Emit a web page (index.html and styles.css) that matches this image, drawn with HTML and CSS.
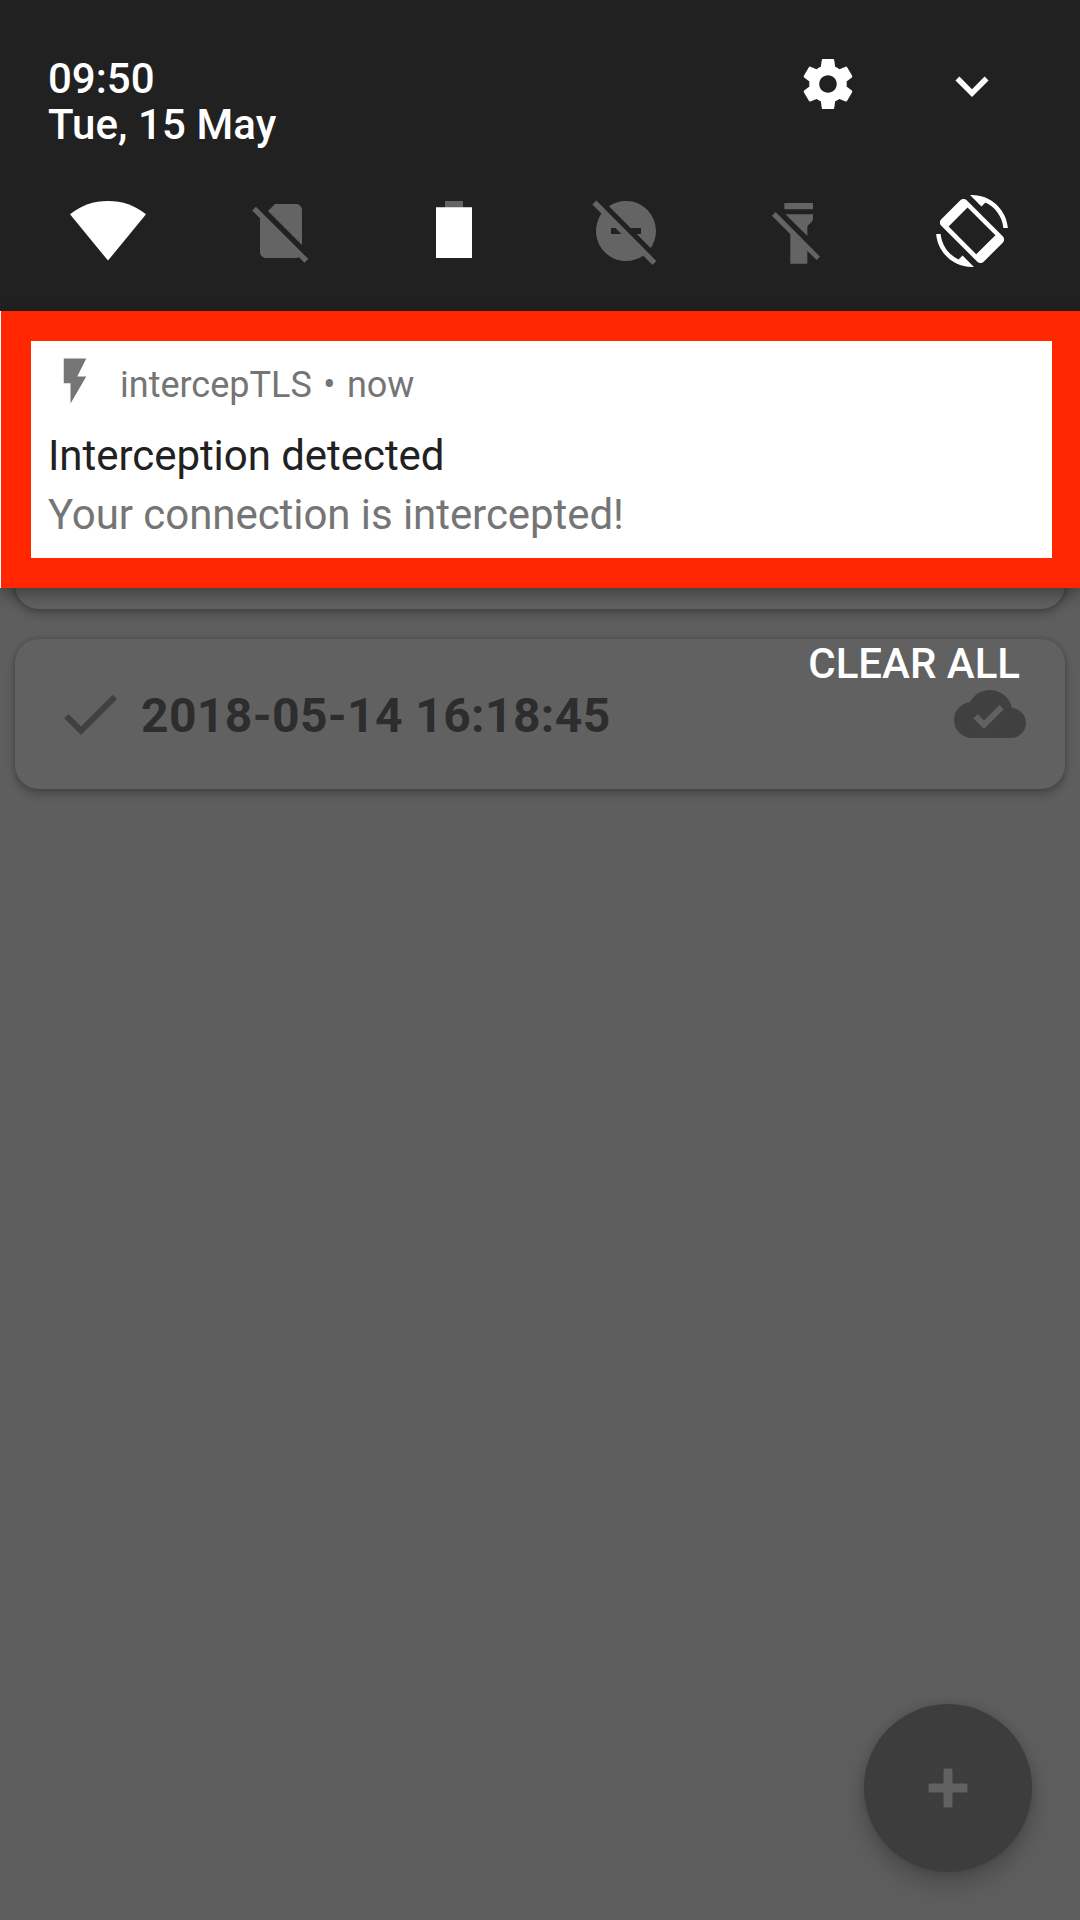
FILE: index.html
```html
<!DOCTYPE html>
<html lang="en">
<head>
<meta charset="utf-8">
<title>intercepTLS</title>
<link rel="stylesheet" href="styles.css">
</head>
<body>
<main class="screen">
  <section class="app">
    <div class="card"></div>
    <div class="card">
      <svg class="icon card-check" viewBox="0 0 24 24"><path d="M9 16.17L4.83 12l-1.42 1.41L9 19 21 7l-1.41-1.41z"/></svg>
      <span class="card-date">2018-05-14 16:18:45</span>
      <svg class="icon card-cloud" viewBox="0 0 24 24"><path d="M19.35 10.04C18.67 6.59 15.64 4 12 4 9.11 4 6.6 5.64 5.35 8.04 2.34 8.36 0 10.91 0 14c0 3.31 2.69 6 6 6h13c2.76 0 5-2.24 5-5 0-2.64-2.05-4.78-4.65-4.96zM10 17l-3.5-3.5 1.41-1.41L10 14.17 15.18 9l1.41 1.41L10 17z"/></svg>
    </div>
    <div class="fab">
      <svg class="fab-plus" viewBox="0 0 40 40"><rect x="15.5" y="0.5" width="9" height="39" rx="1.5"/><rect x="0.5" y="15.5" width="39" height="9" rx="1.5"/></svg>
    </div>
  </section>

  <section class="shade">
    <header class="quick">
      <div class="quick-top">
        <div class="clock"><div>09:50</div><div class="clock-date">Tue, 15 May</div></div>
        <svg class="gear" viewBox="0 0 24 24"><path d="M19.43 12.98c.04-.32.07-.64.07-.98s-.03-.66-.07-.98l2.11-1.65c.19-.15.24-.42.12-.64l-2-3.46c-.12-.22-.39-.3-.61-.22l-2.49 1c-.52-.4-1.08-.73-1.69-.98l-.38-2.65C14.46 2.18 14.25 2 14 2h-4c-.25 0-.46.18-.49.42l-.38 2.65c-.61.25-1.17.59-1.69.98l-2.49-1c-.23-.09-.49 0-.61.22l-2 3.46c-.13.22-.07.49.12.64l2.11 1.65c-.04.32-.07.65-.07.98s.03.66.07.98l-2.11 1.65c-.19.15-.24.42-.12.64l2 3.46c.12.22.39.3.61.22l2.49-1c.52.4 1.08.73 1.69.98l.38 2.65c.03.24.24.42.49.42h4c.25 0 .46-.18.49-.42l.38-2.65c.61-.25 1.17-.59 1.69-.98l2.49 1c.23.09.49 0 .61-.22l2-3.46c.12-.22.07-.49-.12-.64l-2.11-1.65zM12 15.5c-1.93 0-3.5-1.57-3.5-3.5s1.57-3.5 3.5-3.5 3.5 1.57 3.5 3.5-1.57 3.5-3.5 3.5z"/></svg>
        <svg class="chevron" viewBox="0 0 24 24"><path d="M16.59 8.59L12 13.17 7.41 8.59 6 10l6 6 6-6z"/></svg>
      </div>
      <div class="tiles">
        <svg class="tile wifi" viewBox="0 0 78 72"><path d="M1 19.3Q17.5 6 39 6T77 19.3L39 65.6z"/></svg>
        <svg class="icon tile off" viewBox="0 0 24 24"><path d="M18.99 5c0-1.1-.89-2-1.99-2h-7L7.66 5.34 19 16.68 18.99 5zM3.65 3.88L2.38 5.15 5 7.77V19c0 1.1.9 2 2 2h10.01c.35 0 .67-.1.96-.26l1.88 1.88 1.27-1.27L3.65 3.88z"/></svg>
        <svg class="icon tile" viewBox="0 0 72 72"><path class="off" d="M27 6h18v7H27z"/><path d="M18 12.2h36V63H18z"/></svg>
        <svg class="icon tile off" viewBox="0 0 24 24"><path d="M17 11v2h-1.46l4.68 4.68C21.34 16.07 22 14.11 22 12c0-5.52-4.48-10-10-10-2.11 0-4.07.66-5.68 1.78L13.54 11H17zM2.1 1.85L.8 3.15l3 3C2.66 7.93 2 9.89 2 12c0 5.52 4.48 10 10 10 2.11 0 4.07-.66 5.78-1.75L20.83 23.3l1.3-1.3L2.1 1.85zM7 13v-2h1.46l2 2H7z"/></svg>
        <svg class="icon tile off" viewBox="45 0 216 216"><path d="M109 24h86v19h-86zM112 58h83v12c0 12-10 14-17 25v28zM72 62l11-11L216 185l-10 10-28-27v38h-51v-88z"/></svg>
        <svg class="icon tile" viewBox="0 0 24 24"><path fill-rule="evenodd" d="M16.48 2.52c3.27 1.55 5.61 4.72 5.97 8.48h1.5C23.44 4.84 18.29 0 12 0l-.66.03 3.81 3.81 1.33-1.32zM10.23 1.75c-.59-.59-1.54-.59-2.12 0L1.75 8.11c-.59.59-.59 1.54 0 2.12l12.02 12.02c.59.59 1.54.59 2.12 0l6.36-6.36c.59-.59.59-1.54 0-2.12L10.23 1.75zM10.5 4.2L4.2 10.5 13.4 19.75 19.8 13.45zM7.52 21.48C4.25 19.94 1.91 16.76 1.55 13H.05C.56 19.16 5.71 24 12 24l.66-.03-3.81-3.81-1.33 1.32z"/></svg>
      </div>
    </header>
    <article class="notification">
      <div class="alert">
        <div class="alert-head">
          <svg class="bolt" viewBox="0 0 24 24"><path d="M7 2v11h3v9l7-12h-4l4-8z"/></svg>
          <div class="alert-source">
            <span>intercepTLS</span>
            <span>•</span>
            <span>now</span>
          </div>
        </div>
        <div class="alert-title">Interception detected</div>
        <div class="alert-text">Your connection is intercepted!</div>
      </div>
    </article>
    <div class="clear">CLEAR ALL</div>
  </section>
</main>
</body>
</html>
```
FILE: styles.css
```css
* { box-sizing: border-box; }

body {
  margin: 0;
  font-family: Roboto, "Noto Sans", sans-serif;
}

svg { display: block; flex: none; fill: currentColor; }

.screen {
  position: relative;
  width: 1080px;
  height: 1920px;
  overflow: hidden;
  background: #5e5e5e;
}

.app {
  display: flex;
  flex-direction: column;
  gap: 30px;
  height: 100%;
  padding: 459px 15px 48px;
}

.card {
  display: flex;
  align-items: center;
  height: 150px;
  padding: 0 39px;
  border-radius: 24px;
  background: #616161;
  color: #404040;
  box-shadow: 0 5px 10px rgba(0, 0, 0, 0.24), 0 0 5px rgba(0, 0, 0, 0.16);
}

.icon { width: 72px; height: 72px; }

.card-date {
  margin-left: 15px;
  padding-top: 3px;
  font-size: 48px;
  font-weight: 700;
  line-height: 56px;
  letter-spacing: 0.38px;
  color: #2d2d2d;
}

.card-cloud { margin-left: auto; }

.fab {
  display: flex;
  align-items: center;
  justify-content: center;
  align-self: flex-end;
  width: 168px;
  height: 168px;
  margin: auto 33px 0 0;
  border-radius: 50%;
  background: #3d3d3d;
  color: #616161;
  box-shadow: 0 12px 24px rgba(0, 0, 0, 0.22), 0 0 8px rgba(0, 0, 0, 0.12);
}

.fab-plus { width: 40px; height: 40px; }

/* Pulled-down notification shade, layered over the app */
.shade {
  position: absolute;
  inset: 0;
  display: flex;
  flex-direction: column;
}

.quick {
  height: 311px;
  padding-top: 54px;
  background: #212121;
  color: #fff;
}

.quick-top {
  display: flex;
  align-items: flex-start;
  height: 141px;
  padding: 0 75px 0 48px;
}

.clock {
  flex: 1;
  padding-top: 2px;
  font-size: 42px;
  font-weight: 500;
  line-height: 46px;
}

.clock-date { letter-spacing: 0.1px; }

.gear { width: 60px; height: 60px; }

.chevron { width: 66px; height: 66px; margin-left: 81px; margin-top: -1px; }

.tiles {
  display: flex;
  justify-content: space-between;
  padding: 0 72px;
}

.tile { height: 72px; }

.wifi { width: 78px; margin: 0 -3px; }

.off { color: #646464; fill: #646464; }

.notification {
  display: flex;
  height: 277px;
  padding-left: 1px;
  background: #fff;
  box-shadow: 0 5px 16px rgba(0, 0, 0, 0.4);
}

.alert {
  flex: none;
  width: 1081px;
  padding: 13px 17px 0;
  border: 30px solid #ff2600;
  background: #fff;
  font-size: 42px;
  color: #757575;
}

.alert-head {
  display: flex;
  align-items: center;
  height: 54px;
  font-size: 36px;
}

.bolt { width: 54px; height: 54px; }

.alert-source {
  display: flex;
  gap: 11.5px;
  margin-left: 18px;
  padding-top: 8px;
}

.alert-title {
  margin-top: 23px;
  line-height: 50px;
  letter-spacing: -0.05px;
  color: #212121;
}

.alert-text {
  margin-top: 9px;
  line-height: 50px;
  letter-spacing: -0.06px;
}

.clear {
  align-self: flex-end;
  margin: 51px 60px 0 0;
  font-size: 42px;
  font-weight: 500;
  line-height: 50px;
  color: #fff;
}
```
